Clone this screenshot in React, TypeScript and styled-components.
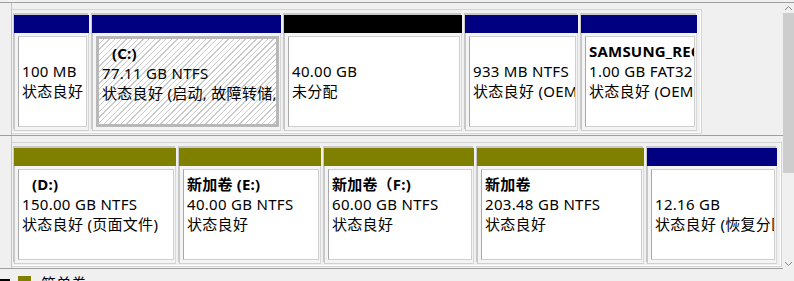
import React from 'react';
import styled, { createGlobalStyle } from 'styled-components';

const GlobalStyle = createGlobalStyle`
  html, body {
    margin: 0;
    padding: 0;
    background: #f0f0f0;
  }
  body {
    font-family: "Noto Sans", "Noto Sans CJK SC", sans-serif;
    font-size: 15px;
    letter-spacing: 0.3px;
    color: #000;
    overflow: hidden;
  }
`;

type Part = {
  w: number;
  color: string;
  name?: string;
  indent?: boolean;
  size: string;
  status: string;
  selected?: boolean;
};

const NAVY = '#000080';
const OLIVE = '#808000';

// two disks, partitions in order
const disks: Part[][] = [
  [
    { w: 75, color: NAVY, size: '100 MB', status: '状态良好' },
    { w: 189, color: NAVY, name: '(C:)', indent: true, size: '77.11 GB NTFS', status: '状态良好 (启动, 故障转储, 主分区)', selected: true },
    { w: 178, color: '#000000', size: '40.00 GB', status: '未分配' },
    { w: 113, color: NAVY, size: '933 MB NTFS', status: '状态良好 (OEM 分区)' },
    { w: 116, color: NAVY, name: 'SAMSUNG_REC', size: '1.00 GB FAT32', status: '状态良好 (OEM 分区)' },
  ],
  [
    { w: 162, color: OLIVE, name: '(D:)', indent: true, size: '150.00 GB NTFS', status: '状态良好 (页面文件)' },
    { w: 142, color: OLIVE, name: '新加卷 (E:)', size: '40.00 GB NTFS', status: '状态良好' },
    { w: 150, color: OLIVE, name: '新加卷（F:)', size: '60.00 GB NTFS', status: '状态良好' },
    { w: 167, color: OLIVE, name: '新加卷', size: '203.48 GB NTFS', status: '状态良好' },
    { w: 130, color: NAVY, size: '12.16 GB', status: '状态良好 (恢复分区)' },
  ],
];

const App: React.FC = () => {
  return (
    <>
      <GlobalStyle />
      <Window>
        <TopEdge />
        <Middle>
          <Main>
            {disks.map((parts, i) => (
              <DiskRow key={i}>
                <LeftStub />
                <Frame>
                  {parts.map((p, j) => (
                    <Block key={j} $w={p.w}>
                      <Header $color={p.color} />
                      <Body>
                        <Box $selected={p.selected}>
                          <Name $indent={p.indent}>{p.name || '\u00a0'}</Name>
                          <Line>{p.size}</Line>
                          <Line>{p.status}</Line>
                        </Box>
                      </Body>
                    </Block>
                  ))}
                </Frame>
              </DiskRow>
            ))}
          </Main>
          <ScrollBar>
            <Arrow>
              <svg width="9" height="6" viewBox="0 0 9 6">
                <polyline points="1,5 4.5,1.5 8,5" fill="none" stroke="#858585" strokeWidth="1" />
              </svg>
            </Arrow>
            <Track>
              <Thumb />
            </Track>
            <Arrow>
              <svg width="9" height="6" viewBox="0 0 9 6">
                <polyline points="1,1 4.5,4.5 8,1" fill="none" stroke="#858585" strokeWidth="1" />
              </svg>
            </Arrow>
          </ScrollBar>
        </Middle>
        <Legend>
          <Swatch $color="#000000" $w={10} />
          <Swatch $color={OLIVE} $w={13} />
          <LegendText>简单卷</LegendText>
        </Legend>
      </Window>
    </>
  );
};

export default App;

const Window = styled.div`
  width: 794px;
  height: 281px;
  display: flex;
  flex-direction: column;
  overflow: hidden;
`;

const TopEdge = styled.div`
  height: 2px;
  border-bottom: 1px solid #a0a0a0;
  flex: none;
`;

const Middle = styled.div`
  display: flex;
  flex: none;
`;

const Main = styled.div`
  flex: 1;
  display: flex;
  flex-direction: column;
`;

const DiskRow = styled.div`
  height: 132px;
  display: flex;
  border-bottom: 1px solid #a0a0a0;
`;

const LeftStub = styled.div`
  width: 11px;
  border-right: 1px solid #c4c4c4;
  flex: none;
`;

const Frame = styled.div`
  align-self: flex-start;
  margin-top: 6px;
  padding: 5px 4px 2px 2px;
  display: flex;
  gap: 3px;
  border: 1px solid #d4d4d4;
  border-left: none;
  box-shadow: inset -1px -1px 0 #ffffff;
`;

const Block = styled.div<{ $w: number }>`
  width: ${(p) => p.$w}px;
  height: 116px;
  display: flex;
  flex-direction: column;
  box-shadow: -1px -2px 0 #c8c8c8;
`;

const Header = styled.div<{ $color: string }>`
  height: 18px;
  background: ${(p) => p.$color};
  flex: none;
`;

const Body = styled.div`
  flex: 1;
  display: flex;
  padding: 3px 1px 3px 3px;
  border-left: 1px solid #c8c8c8;
  border-right: 1px solid #d8d8d8;
  border-bottom: 1px solid #d0d0d0;
  background: #f4f4f4;
`;

const Box = styled.div<{ $selected?: boolean }>`
  flex: 1;
  min-width: 0;
  overflow: hidden;
  white-space: nowrap;
  padding: 4px 0 0 3px;
  line-height: 20px;
  background: ${(p) =>
    p.$selected
      ? 'repeating-linear-gradient(135deg, #ffffff 0 3px, #cbcbcb 3px 4px)'
      : '#ffffff'};
  border: ${(p) => (p.$selected ? '3px solid #b8b8b8' : '1px solid #cfcfcf')};
  border-left-color: ${(p) => (p.$selected ? '#b8b8b8' : '#a8a8a8')};
`;

const Name = styled.div<{ $indent?: boolean }>`
  font-weight: 700;
  letter-spacing: 0.2px;
  padding-left: ${(p) => (p.$indent ? '10px' : '0')};
`;

const Line = styled.div``;

const ScrollBar = styled.div`
  width: 11px;
  flex: none;
  display: flex;
  flex-direction: column;
  background: #f0f0f0;
`;

const Arrow = styled.div`
  height: 10px;
  display: flex;
  align-items: center;
  justify-content: center;
  flex: none;
`;

const Track = styled.div`
  flex: 1;
  display: flex;
  flex-direction: column;
`;

const Thumb = styled.div`
  height: 160px;
  background: #cdcdcd;
`;

const Legend = styled.div`
  flex: 1;
  display: flex;
  align-items: flex-start;
  padding-top: 7px;
  gap: 8px;
`;

const Swatch = styled.div<{ $color: string; $w: number }>`
  width: ${(p) => p.$w}px;
  height: 13px;
  background: ${(p) => p.$color};
  &:first-child {
    height: 2px;
    margin-top: 3px;
  }
`;

const LegendText = styled.div`
  margin-left: 2px;
  line-height: 14px;
`;
